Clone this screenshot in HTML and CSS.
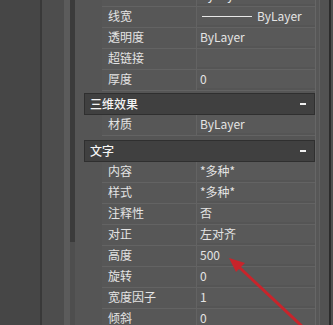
FILE: index.html
```html
<!DOCTYPE html>
<html>
<head>
<meta charset="utf-8">
<link rel="stylesheet" href="styles.css">
</head>
<body>
<div class="wrap">
  <div class="c1"></div>
  <div class="c2"></div>
  <div class="c3"></div>
  <div class="c4"></div>
  <div class="scroll"><div class="thumb"></div></div>
  <div class="panel">
    <div class="inner">
      <div class="group">
        <div class="row"><div class="lab"></div><div class="val">ByLayer</div></div>
        <div class="row"><div class="lab">线宽</div><div class="val"><span class="lw"></span>ByLayer</div></div>
        <div class="row"><div class="lab">透明度</div><div class="val">ByLayer</div></div>
        <div class="row"><div class="lab">超链接</div><div class="val"></div></div>
        <div class="row"><div class="lab">厚度</div><div class="val">0</div></div>
      </div>
      <div class="head h1"><span>三维效果</span><span class="minus"></span></div>
      <div class="group">
        <div class="row"><div class="lab">材质</div><div class="val">ByLayer</div></div>
      </div>
      <div class="head h2"><span>文字</span><span class="minus"></span></div>
      <div class="group">
        <div class="row"><div class="lab">内容</div><div class="val">*多种*</div></div>
        <div class="row"><div class="lab">样式</div><div class="val">*多种*</div></div>
        <div class="row"><div class="lab">注释性</div><div class="val">否</div></div>
        <div class="row"><div class="lab">对正</div><div class="val">左对齐</div></div>
        <div class="row"><div class="lab">高度</div><div class="val">500</div></div>
        <div class="row"><div class="lab">旋转</div><div class="val">0</div></div>
        <div class="row"><div class="lab">宽度因子</div><div class="val">1</div></div>
        <div class="row"><div class="lab">倾斜</div><div class="val">0</div></div>
      </div>
    </div>
  </div>
  <div class="edge">
    <div class="e1"></div>
    <div class="e2"></div>
    <div class="e3"></div>
    <div class="e4"></div>
    <div class="e5"></div>
  </div>
</div>
<svg class="arrow" width="333" height="325" viewBox="0 0 333 325">
  <line x1="240" y1="268" x2="306" y2="330" stroke="#c8242b" stroke-width="3" stroke-linecap="round"/>
  <polygon points="229,258 245,263 236,272" fill="#c8242b"/>
</svg>
</body>
</html>
```

FILE: styles.css
```css
html, body {
  margin: 0;
  padding: 0;
  width: 333px;
  height: 325px;
  overflow: hidden;
  background: #4a4a4a;
  font-family: "Noto Sans CJK SC", "Noto Sans", sans-serif;
  font-size: 12px;
}
.wrap {
  display: flex;
  height: 325px;
  position: relative;
}
.c1 { width: 40px; background: #464646; }
.c2 { width: 2px; background: #393939; }
.c3 { width: 22px; background: #4d4d4d; }
.c4 { width: 6px; background: #5b5b5b; }
.scroll { width: 5px; background: #4e4e4e; }
.thumb { height: 242px; background: #3b3b3b; }
.panel {
  width: 240px;
  background: #555555;
  overflow: hidden;
  border-left: 0;
}
.inner {
  margin-top: -14px;
  display: flex;
  flex-direction: column;
}
.group {
  margin-left: 27px;
  display: flex;
  flex-direction: column;
}
.row {
  height: 21px;
  box-sizing: border-box;
  border-bottom: 1px solid #636363;
  display: grid;
  grid-template-columns: 95px 1fr;
  color: #e4e4e4;
}
.lab {
  background: #575757;
  border-right: 1px solid #636363;
  padding-left: 6px;
  line-height: 18px;
}
.val {
  background: #595959;
  padding-left: 3px;
  line-height: 18px;
  display: flex;
  align-items: center;
  height: 18px;
}
.lw {
  display: inline-block;
  width: 50px;
  height: 1px;
  background: #e8e8e8;
  margin: 0 5px 0 2px;
}
.head {
  margin-left: 9px;
  height: 22px;
  box-sizing: border-box;
  background: #404040;
  border: 1px solid #2f2f2f;
  color: #f4f4f4;
  font-weight: 500;
  display: flex;
  align-items: center;
  justify-content: space-between;
  padding: 0 8px 1px 5px;
  line-height: 18px;
}
.h1 { margin-top: 2px; }
.h2 { margin-top: 4px; }
.minus {
  width: 6px;
  height: 2px;
  background: #f0f0f0;
}
.edge {
  flex: 1;
  display: flex;
}
.e1 { width: 1px; background: #666666; }
.e2 { width: 3px; background: #575757; }
.e3 { width: 9px; background: #525252; border-left: 1px solid #616161; }
.e4 { width: 2px; background: #2b2b2b; }
.e5 { flex: 1; background: #505050; }
.arrow {
  position: absolute;
  left: 0;
  top: 0;
}
```
